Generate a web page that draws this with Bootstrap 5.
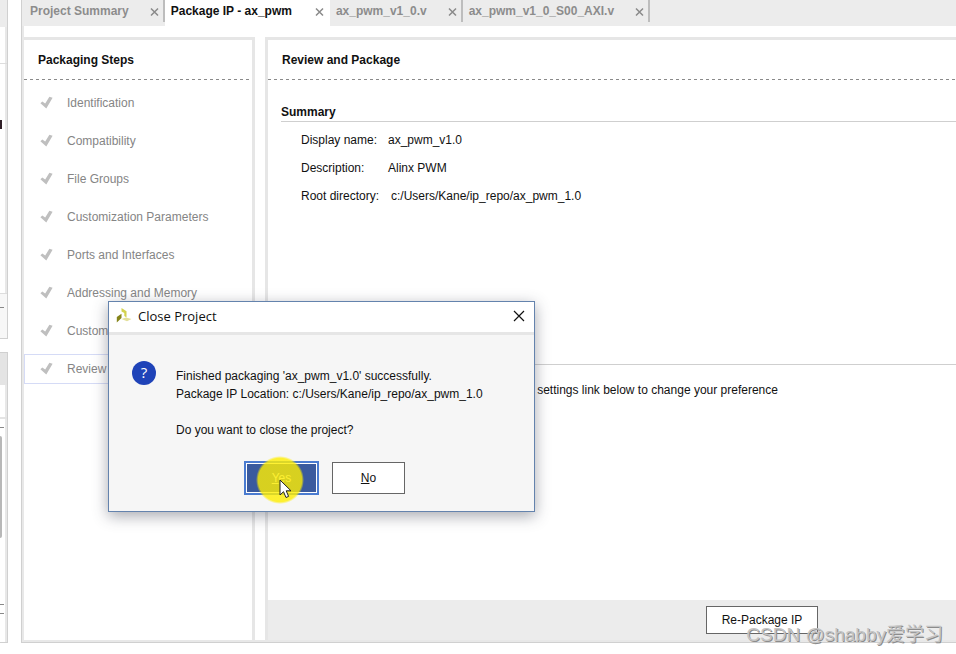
<!DOCTYPE html>
<html lang="en">
<head>
<meta charset="utf-8">
<meta name="viewport" content="width=device-width, initial-scale=1">
<title>Package IP - ax_pwm</title>
<link href="https://cdn.jsdelivr.net/npm/bootstrap@5.3.0/dist/css/bootstrap.min.css" rel="stylesheet">
<style>
body{font:12px/18px "Liberation Sans",Arial,sans-serif;color:#111;background:#fff;overflow:hidden}
a{color:inherit;text-decoration:none}
.workspace{height:100vh;padding-bottom:11px}
/* neighbouring docks, cut by the window edge */
.dock-rail{width:8px;gap:13px}
.dock{border:solid #d0d0d0;border-width:0 1px 1px 0;box-shadow:inset -2px 0 #e8e8e8}
.dock-one{height:339px}
.dock-two{border-top-width:1px}
.dock-head{height:27px;background:#ececec}
.dock-two .dock-head{height:32px;background:#e4e4e4}
.dock-bar{height:37px;border-bottom:1px solid #ddd}
.dock-two .dock-bar{height:34px;border-bottom:2px solid #e4e4e4}
.dock-item{width:2px;height:9px;background:#302028;margin-top:56px}
.dock-foot{height:45px;border-top:1px solid #ddd;background:#f7f7f7;padding-top:13px}
.tick-line{width:4px;height:1px;background:#888}
.scroll-thumb{width:2px;height:102px;background:#b8b8b8;border-radius:0 2px 2px 0;margin:8px 0 66px}
/* editor */
.editor{margin-left:13px;border:solid #d0d0d0;border-width:0 0 1px 1px}
.editor-inner{border:solid #e8e8e8;border-width:0 0 2px 2px}
.tab-strip{height:26px;background:#ececec;margin-left:-2px}
.tab-item{height:26px;padding:0 4px 4px 6px;color:#8c8c8c;font-weight:700;gap:21px}
.tab-item:first-child{padding-left:8px}
.tab-item a{line-height:22px}
.tab-item.current{background:#fff;color:#111;padding-right:6px;gap:23px}
.tab-edge{width:2px;height:22px;background:#bdbdbd}
.tab-close{border:0;padding:0;background:none;display:flex;width:9px;margin-top:3px}
.panes{gap:10px;padding-top:11px}
.steps-pane{width:231px;border:solid #e6e6e6;border-width:3px 3px 0 0}
.review-pane{border:solid #e6e6e6;border-width:3px 0 0 3px;min-width:0}
.pane-title{font-size:12px;line-height:18px;font-weight:700;height:40px;padding:11px 14px 0;margin:0;background:repeating-linear-gradient(90deg,#8a8a8a 0 3px,transparent 3px 6px) left bottom/100% 1px no-repeat}
.steps-list{gap:8px;padding-top:8px}
.step-link{height:30px;color:#858585;padding-left:15px;gap:14px;border:1px solid transparent;margin-right:1px}
.step-link.current{border-color:#d5dbf6}
.review-body{padding:23px 0 0 13px}
.sec-title{font-size:12px;line-height:18px;font-weight:700;margin:0;border-bottom:1px solid #cfcfcf}
.fields{padding:9px 0 0 20px;margin:0}
.fields>div{height:28px}
.fields dt{font-weight:400;width:87px}
.fields .path-row dt{width:90px}
.fields dd{margin:0}
.after-sec{margin-top:131px}
.after-sec p{padding:16px 0 0 34px;margin:0}
.action-bar{height:40px;background:#ececec;padding:6px 138px 0 0}
.push{border:1px solid #666;background:#fff;color:#111;padding:0;line-height:18px}
.push-pack{width:112px;height:28px}
/* dialog */
.ask{position:absolute;left:108px;top:301px;width:427px;background:#f6f6f6;border:1px solid #6483ad;box-shadow:0 4px 14px rgba(60,65,80,.45)}
.ask-head{background:#fff;border-bottom:3px solid #e6e6e6;padding:0 9px 2px 7px;gap:6px;box-sizing:content-box;height:28px}
.ask-title{font:13px/18px "Open Sans","Noto Sans",sans-serif;margin:0}
.ask-close{border:0;background:none;padding:0;display:flex}
.ask-body{padding:26px 23px 0;gap:20px}
.ask-body p{margin:6px 0 0}
.ask-actions{padding:22px 0 16px 135px;gap:13px}
.push-yes{width:75px;height:34px;background:#3a5a9e;border:2px solid #4a7bd0;box-shadow:inset 0 0 0 1px #fff;color:#f0f2fa}
.push-no{width:73px;height:32px}
.click-halo{position:absolute;left:147px;top:154px;width:48px;height:48px;border-radius:50%;background:radial-gradient(rgba(255,238,0,.8) 64%,rgba(255,238,0,0) 71%);pointer-events:none}
.pointer{position:absolute;left:170px;top:177px;pointer-events:none}
.credit{position:absolute;right:13px;bottom:6px;font:19px/26px "Liberation Sans","Noto Sans CJK SC",sans-serif;color:#c4c4c4;text-shadow:1px 1px 0 #8c8c8c}
</style>
<script src="https://cdn.jsdelivr.net/npm/bootstrap@5.3.0/dist/js/bootstrap.bundle.min.js"></script>
</head>
<body>
<svg class="d-none">
<symbol id="ic-x" viewBox="0 0 9 9"><path d="M1 1l7 7M8 1l-7 7" stroke="#8a8a8a" stroke-width="1.5" fill="none"/></symbol>
<symbol id="ic-check" viewBox="0 0 13 14"><path d="M.4 7.300L2.300 5.400L5.200 7.500L9.400.8L12.600 1.800L6.300 12.600Z" fill="#bfbfbf"/></symbol>
</svg>
<div class="workspace d-flex">
  <aside class="dock-rail d-flex flex-column flex-shrink-0">
    <div class="dock dock-one d-flex flex-column">
      <div class="dock-head"></div><div class="dock-bar"></div><div class="dock-item"></div>
      <div class="dock-foot mt-auto"><div class="tick-line"></div></div>
    </div>
    <div class="dock dock-two flex-fill">
      <div class="dock-head"></div><div class="dock-bar"></div>
      <div class="tick-line mt-2"></div>
      <div class="scroll-thumb"></div>
      <div class="tick-line mb-2"></div><div class="tick-line"></div>
    </div>
  </aside>
  <main class="editor d-flex flex-fill">
   <div class="editor-inner d-flex flex-column flex-fill">
    <nav class="tab-strip d-flex">
      <div class="tab-item d-flex"><a href="#">Project Summary</a><button class="tab-close" aria-label="Close Project Summary"><svg width="9" height="18"><use href="#ic-x"/></svg></button></div>
      <div class="tab-edge"></div>
      <div class="tab-item current d-flex"><a href="#">Package IP - ax_pwm</a><button class="tab-close" aria-label="Close Package IP"><svg width="9" height="18"><use href="#ic-x"/></svg></button></div>
      <div class="tab-item d-flex"><a href="#">ax_pwm_v1_0.v</a><button class="tab-close" aria-label="Close ax_pwm_v1_0.v"><svg width="9" height="18"><use href="#ic-x"/></svg></button></div>
      <div class="tab-edge"></div>
      <div class="tab-item d-flex"><a href="#">ax_pwm_v1_0_S00_AXI.v</a><button class="tab-close" aria-label="Close ax_pwm_v1_0_S00_AXI.v"><svg width="9" height="18"><use href="#ic-x"/></svg></button></div>
      <div class="tab-edge"></div>
    </nav>
    <div class="panes d-flex flex-fill">
      <section class="steps-pane flex-shrink-0">
        <h2 class="pane-title">Packaging Steps</h2>
        <nav class="steps-list d-flex flex-column">
          <a href="#" class="step-link d-flex align-items-center"><svg width="13" height="14"><use href="#ic-check"/></svg>Identification</a>
          <a href="#" class="step-link d-flex align-items-center"><svg width="13" height="14"><use href="#ic-check"/></svg>Compatibility</a>
          <a href="#" class="step-link d-flex align-items-center"><svg width="13" height="14"><use href="#ic-check"/></svg>File Groups</a>
          <a href="#" class="step-link d-flex align-items-center"><svg width="13" height="14"><use href="#ic-check"/></svg>Customization Parameters</a>
          <a href="#" class="step-link d-flex align-items-center"><svg width="13" height="14"><use href="#ic-check"/></svg>Ports and Interfaces</a>
          <a href="#" class="step-link d-flex align-items-center"><svg width="13" height="14"><use href="#ic-check"/></svg>Addressing and Memory</a>
          <a href="#" class="step-link d-flex align-items-center"><svg width="13" height="14"><use href="#ic-check"/></svg>Customization GUI</a>
          <a href="#" class="step-link current d-flex align-items-center"><svg width="13" height="14"><use href="#ic-check"/></svg>Review and Package</a>
        </nav>
      </section>
      <section class="review-pane d-flex flex-column flex-fill">
        <h2 class="pane-title">Review and Package</h2>
        <div class="review-body">
          <h3 class="sec-title">Summary</h3>
          <dl class="fields">
            <div class="d-flex"><dt>Display name:</dt><dd>ax_pwm_v1.0</dd></div>
            <div class="d-flex"><dt>Description:</dt><dd>Alinx PWM</dd></div>
            <div class="d-flex path-row"><dt>Root directory:</dt><dd>c:/Users/Kane/ip_repo/ax_pwm_1.0</dd></div>
          </dl>
          <div class="after-sec">
            <h3 class="sec-title">After Packaging</h3>
            <p>An archive will not be generated. Use the settings link below to change your preference</p>
          </div>
        </div>
        <div class="action-bar d-flex justify-content-end mt-auto"><button class="push push-pack">Re-Package IP</button></div>
      </section>
    </div>
   </div>
  </main>
</div>

<div class="ask" role="dialog" aria-labelledby="askTitle">
  <div class="ask-head d-flex align-items-center">
    <svg width="16" height="16" viewBox="0 0 16 16"><path d="M5.500 0L10.500 3.200V9.500L8.300 8V5L5.500 3.500Z" fill="#d3d24e"/><path d="M.8 9L5.500 5.800V10L.8 14.500Z" fill="#85841a"/><path d="M5.500 11L10 9.500L15.500 11L11 13.300Z" fill="#e3e09a"/></svg>
    <h1 class="ask-title flex-fill" id="askTitle">Close Project</h1>
    <button class="ask-close" aria-label="Close"><svg width="12" height="12"><path d="M1 1l10 10M11 1L1 11" stroke="#111" stroke-width="1.2"/></svg></button>
  </div>
  <div class="ask-body d-flex">
    <svg class="flex-shrink-0" width="24" height="24"><circle cx="12" cy="12" r="12" fill="#1f43b8"/><text x="12" y="17" text-anchor="middle" font-size="15" font-family="Open Sans" fill="#fff">?</text></svg>
    <p>Finished packaging 'ax_pwm_v1.0' successfully.<br>Package IP Location: c:/Users/Kane/ip_repo/ax_pwm_1.0<br><br>Do you want to close the project?</p>
  </div>
  <div class="ask-actions d-flex align-items-center">
    <button class="push push-yes"><u>Y</u>es</button>
    <button class="push push-no"><u>N</u>o</button>
  </div>
  <div class="click-halo"></div>
  <svg class="pointer" width="13" height="20" viewBox="0 0 13 20"><path d="M1 1v15l3.500-3.300L7 18.500l2.600-1.100L7.200 11.800H12z" fill="#fff" stroke="#222"/></svg>
</div>
<div class="credit">CSDN @shabby爱学习</div>
</body>
</html>
